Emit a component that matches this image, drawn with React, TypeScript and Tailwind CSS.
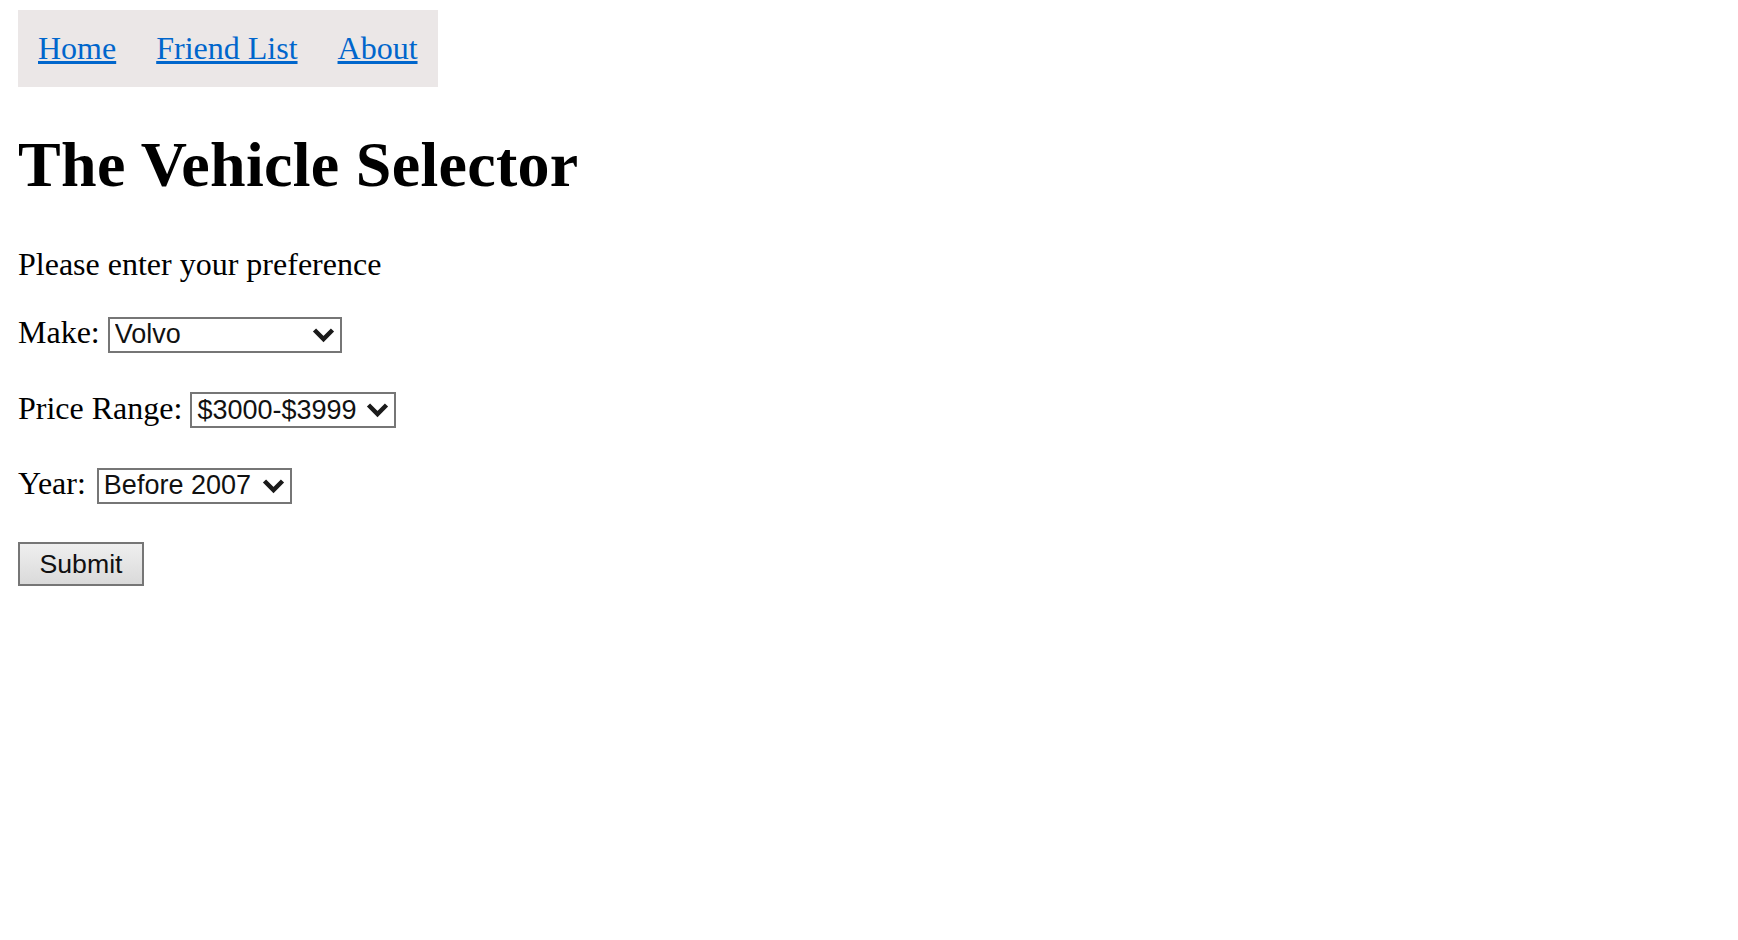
import React, { useState } from "react";

const Chevron = () => (
    <svg
        className="pointer-events-none absolute right-[7px] top-[10px]"
        width="23"
        height="16"
        viewBox="0 0 23 16"
        fill="none"
    >
        <polyline points="2.5,3 11.5,12 20.5,3" stroke="#1a1a1a" strokeWidth="4.5" />
    </svg>
);

type PickerProps = {
    width: string;
    value: string;
    options: string[];
    onChange: (v: string) => void;
};

const Picker = ({ width, value, options, onChange }: PickerProps) => (
    <span className={`relative inline-block ${width}`}>
        <select
            value={value}
            onChange={(e) => onChange(e.target.value)}
            className="block w-full h-[36px] appearance-none border-2 border-[#767676] bg-white pl-[5px] pr-[30px] text-[27px] leading-[31px] text-[#111] font-['Liberation_Sans',Arial,sans-serif] outline-none"
        >
            {options.map((o) => (
                <option key={o}>{o}</option>
            ))}
        </select>
        <Chevron />
    </span>
);

export default function App() {
    const [make, setMake] = useState("Volvo");
    const [price, setPrice] = useState("$3000-$3999");
    const [year, setYear] = useState("Before 2007");

    return (
        <div className="min-h-screen bg-white pl-[18px] pt-[10px] font-['Liberation_Serif','Times_New_Roman',serif] text-black">
            {/* Nav */}
            <nav className="inline-flex gap-[40px] bg-[#ebe7e7] p-[20px] text-[32px] leading-[37px]">
                <a href="#" className="text-[#0066cc] underline">Home</a>
                <a href="#" className="text-[#0066cc] underline">Friend List</a>
                <a href="#" className="text-[#0066cc] underline">About</a>
            </nav>

            <h1 className="mt-[41px] text-[64px] font-bold leading-[74px] tracking-[0.3px]">The Vehicle Selector</h1>

            <p className="mt-[44px] text-[32px] leading-[37px]">Please enter your preference</p>

            <div className="mt-[31px] flex flex-col gap-[37px] text-[32px] leading-[37px]">
                <div className="flex items-baseline gap-[8px]">
                    <span>Make:</span>
                    <Picker width="w-[234px]" value={make} onChange={setMake} options={["Volvo", "Saab", "Mercedes-Benz", "Audi"]} />
                </div>
                <div className="flex items-baseline gap-[8px]">
                    <span>Price Range:</span>
                    <Picker width="w-[206px]" value={price} onChange={setPrice} options={["$1000-$1999", "$2000-$2999", "$3000-$3999", "$4000+"]} />
                </div>
                <div className="flex items-baseline gap-[11px]">
                    <span>Year:</span>
                    <Picker width="w-[195px]" value={year} onChange={setYear} options={["Before 2007", "2007-2012", "After 2012"]} />
                </div>
            </div>

            <button className="mt-[38px] h-[44px] w-[126px] border-2 border-[#767676] bg-gradient-to-b from-[#efefef] to-[#dadada] text-[26.67px] text-[#111] font-['Liberation_Sans',Arial,sans-serif]">
                Submit
            </button>
        </div>
    );
}
